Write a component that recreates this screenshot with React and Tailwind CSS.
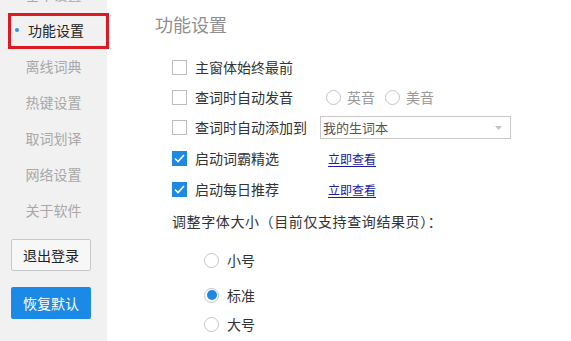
const font = { fontFamily: '"Noto Sans CJK SC", "Noto Sans", sans-serif' };

function Checkbox({ checked }) {
  if (checked) {
    return (
      <span className="flex h-[15px] w-[15px] shrink-0 items-center justify-center bg-[#1e88e5]">
        <svg width="11" height="9" viewBox="0 0 11 9" fill="none">
          <path d="M1 4.5 L4 7.5 L10 1" stroke="white" strokeWidth="1.6" />
        </svg>
      </span>
    );
  }
  return <span className="h-[15px] w-[15px] shrink-0 border border-[#bcbcbc] bg-white" />;
}

function Radio({ checked }) {
  return (
    <span className="flex h-[15px] w-[15px] shrink-0 items-center justify-center rounded-full border border-[#c4c4c4] bg-white">
      {checked && <span className="h-[10px] w-[10px] rounded-full bg-[#1e88e5]" />}
    </span>
  );
}

function Row({ className = "", children }) {
  return <div className={`flex items-center ${className}`}>{children}</div>;
}

const navItems = ["基本设置", "功能设置", "离线词典", "热键设置", "取词划译", "网络设置", "关于软件"];

export default function App() {
  return (
    <div className="flex h-[341px] w-[571px] overflow-hidden bg-white" style={font}>
      <aside className="flex w-[107px] shrink-0 flex-col bg-[#f1f1f1]">
        <ul className="mt-[-24px]">
          {navItems.map((item) => {
            const active = item === "功能设置";
            return (
              <li
                key={item}
                className={`relative flex h-[36px] items-center justify-center text-[14px] ${
                  active ? "text-[#222]" : "text-[#a8a8a8]"
                }`}
              >
                {active && (
                  <>
                    <span className="absolute left-[15px] top-[16px] h-[4px] w-[4px] rounded-full bg-[#3a8ee0]" />
                    <span className="absolute bottom-[-1px] left-[8px] right-[-2px] top-[1px] border-[3px] border-[#dc1a22]" />
                  </>
                )}
                <span className={active ? "ml-[5px]" : ""}>{item}</span>
              </li>
            );
          })}
        </ul>
        <button className="ml-[11px] mt-[11px] h-[32px] w-[80px] rounded-[2px] border border-[#c8c8c8] bg-[#f7f7f7] text-[14px] text-[#222]">
          退出登录
        </button>
        <button className="ml-[11px] mt-[16px] h-[32px] w-[80px] rounded-[2px] bg-[#1a8ae6] text-[14px] text-white">
          恢复默认
        </button>
      </aside>

      <main className="flex flex-1 flex-col pl-[48px]">
        <h1 className="mt-[10px] flex h-[28px] items-center text-[18px] font-normal text-[#8f8f8f]">功能设置</h1>

        <div className="mt-[14px] flex flex-col pl-[17px] text-[14px] text-[#333]">
          <Row className="h-[30px] gap-[8px]">
            <Checkbox />
            <span>主窗体始终最前</span>
          </Row>
          <Row className="h-[30px]">
            <Checkbox />
            <span className="ml-[8px] w-[131px]">查词时自动发音</span>
            <Radio />
            <span className="ml-[6px] text-[#9a9a9a]">英音</span>
            <span className="ml-[10px]">
              <Radio />
            </span>
            <span className="ml-[6px] text-[#9a9a9a]">美音</span>
          </Row>
          <Row className="h-[31px]">
            <Checkbox />
            <span className="ml-[8px] w-[125px]">查词时自动添加到</span>
            <div className="flex h-[23px] w-[191px] items-center justify-between border border-[#c9c9c9] bg-white pl-[2px] pr-[8px] text-[13px] text-[#555]">
              <span>我的生词本</span>
              <svg width="7" height="4" viewBox="0 0 7 4">
                <path d="M0 0 L7 0 L3.5 4 Z" fill="#c4c4c4" />
              </svg>
            </div>
          </Row>
          <Row className="h-[31px]">
            <Checkbox checked />
            <span className="ml-[8px] w-[133px]">启动词霸精选</span>
            <a className="text-[12px] text-[#1a1aa5] underline underline-offset-2">立即查看</a>
          </Row>
          <Row className="h-[31px]">
            <Checkbox checked />
            <span className="ml-[8px] w-[133px]">启动每日推荐</span>
            <a className="text-[12px] text-[#1a1aa5] underline underline-offset-2">立即查看</a>
          </Row>
          <Row className="h-[32px]">
            <span className="tracking-[0.6px]">调整字体大小（目前仅支持查询结果页）：</span>
          </Row>

          <div className="flex flex-col pl-[32px]">
            <Row className="mt-[8px] h-[30px] gap-[8px]">
              <Radio />
              <span>小号</span>
            </Row>
            <Row className="mt-[5px] h-[30px] gap-[8px]">
              <Radio checked />
              <span>标准</span>
            </Row>
            <Row className="h-[28px] gap-[8px]">
              <Radio />
              <span>大号</span>
            </Row>
          </div>
        </div>
      </main>
    </div>
  );
}
